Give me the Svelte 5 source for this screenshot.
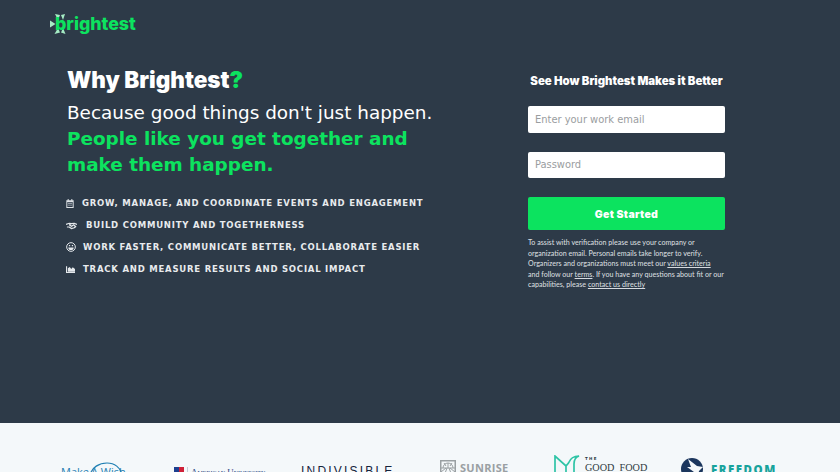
<script>
  const bullets = [
    { text: 'Grow, manage, and coordinate events and engagement', icon: 'cal' },
    { text: 'Build community and togetherness', icon: 'hands' },
    { text: 'Work faster, communicate better, collaborate easier', icon: 'smile' },
    { text: 'Track and measure results and social impact', icon: 'chart' }
  ];
</script>

<div class="page">
  <section class="hero">
    <header class="top">
      <a class="logo" href="#home">
        <svg class="sun" viewBox="0 0 20 20" width="20" height="20" aria-hidden="true">
          <g fill="#a5ecc4">
            <path d="M0 6.500 5.500 10 0 13.500Z" />
            <path d="M5 0 10 1 8 6Z" />
            <path d="M15 0 11 1 13 6Z" />
            <path d="M4.500 20 10 18.500 8 14Z" />
            <path d="M15.500 20 11 18.500 13 14Z" />
          </g>
        </svg>
        <span class="word">brightest</span>
      </a>
    </header>

    <div class="columns">
      <div class="pitch">
        <h1>Why Brightest<span class="green">?</span></h1>
        <p class="lead">Because good things don't just happen.</p>
        <p class="strong">People like you get together and make them happen.</p>
        <ul>
          {#each bullets as b}
            <li class={b.icon}>
              <svg viewBox="0 0 12 12" preserveAspectRatio="none" aria-hidden="true" class="ico">
                {#if b.icon === 'cal'}
                  <path fill="#dfe3e7" fill-rule="evenodd" d="M2.500 0h1.500v1.500h4V0h1.500v1.500H11.500V12H.5V1.500h2ZM2 4v6.500h8V4Z" />
                  <path fill="#b4bac1" d="M3 5h6v1.200H3ZM3 7.500h6v1.200H3Z" />
                {:else if b.icon === 'hands'}
                  <path fill="none" stroke="#e4e8ec" stroke-width="1.500" d="M0 4.500 3.500 3 6 3.500 9 3l3 1.500M1 8l2.500 0 2.500 2 3-1 2-2M3.500 5 6 7l2.500-2 1.500 2M6 3.500 3.500 5" />
                {:else if b.icon === 'smile'}
                  <circle cx="6" cy="6" r="5.200" fill="none" stroke="#e4e8ec" stroke-width="1.200" />
                  <path fill="#e4e8ec" d="M2.800 6.500h6.400a3.200 3.200 0 0 1-6.400 0ZM3.500 3.500h1.500v1.500H3.500ZM7 3.500h1.500v1.500H7Z" />
                {:else}
                  <path fill="#e4e8ec" d="M0 2h1.500v8.500H12V12H0ZM2.500 10V5L5 3l2 3 2-2.500L12 6v4Z" />
                {/if}
              </svg>
              <span>{b.text}</span>
            </li>
          {/each}
        </ul>
      </div>

      <form class="signup">
        <h2>See How Brightest Makes it Better</h2>
        <input type="email" placeholder="Enter your work email" />
        <input type="password" placeholder="Password" />
        <button type="button">Get Started</button>
        <p class="fine">
          To assist with verification please use your company or<br />
          organization email. Personal emails take longer to verify.<br />
          Organizers and organizations must meet our <a href="#values">values criteria</a><br />
          and follow our <a href="#terms">terms</a>. If you have any questions about fit or our<br />
          capabilities, please <a href="#contact">contact us directly</a>
        </p>
      </form>
    </div>
  </section>

  <section class="logos">
    <div class="mw">
      <span>Make</span>
      <svg class="mw-arc" viewBox="0 0 34 14" width="34" height="14" aria-hidden="true">
        <path d="M1 14C2 5 11 1 18 1c7 0 14 4 15 13" fill="none" stroke="#1f7fb3" stroke-width="1.200" />
      </svg>
      <span class="mw-b">A Wish</span>
    </div>
    <div class="au">
      <svg viewBox="0 0 10 8" width="10" height="8" aria-hidden="true">
        <rect width="5" height="8" fill="#1d3f8f" />
        <rect x="5" width="5" height="8" fill="#cf2037" />
      </svg>
      <span class="au-rule"></span>
      <span>American University</span>
    </div>
    <div class="ind">INDIVISIBLE</div>
    <div class="sunrise">
      <svg viewBox="0 0 16 16" width="16" height="16" aria-hidden="true">
        <rect x="0.750" y="0.750" width="14.500" height="14.500" fill="none" stroke="#9aa0a3" stroke-width="1.500" />
        <path d="M1 8h14M3 8a5 5 0 0 1 10 0M8 3v5M4 3l2 3M12 3l-2 3M1 12l5-4M15 12l-5-4M4 16l3-8M12 16l-3-8" fill="none" stroke="#9aa0a3" />
      </svg>
      <span>SUNRISE</span>
    </div>
    <div class="food">
      <svg viewBox="0 0 26 20" width="26" height="20" aria-hidden="true">
        <path d="M1 1v18h19V9c0-4 2-7 5-8-5 0-9 3-10.500 7L12 11 1 1ZM12 11v8" fill="none" stroke="#2ec4a6" stroke-width="1.700" />
      </svg>
      <div class="food-t">
        <span class="the">T H E</span>
        <span class="gf">GOOD&nbsp; FOOD</span>
      </div>
    </div>
    <div class="freedom">
      <svg viewBox="0 0 22 22" width="22" height="22" aria-hidden="true">
        <circle cx="11" cy="11" r="11" fill="#1b365d" />
        <path d="M7 1 16 8l6 1-4 4-2 9-3-8-7-5 4 0Z" fill="#f4f8fa" />
      </svg>
      <span>FREEDOM</span>
    </div>
  </section>
</div>

<style>
  :global(body) {
    margin: 0;
    overflow: hidden;
  }

  .page {
    width: 840px;
    height: 472px;
    overflow: hidden;
    font-family: "DejaVu Sans", sans-serif;
  }

  .hero {
    height: 423px;
    background: #2d3a48;
    box-sizing: border-box;
    padding: 10px 0 0 50px;
  }

  .top {
    height: 28px;
  }

  .logo {
    position: relative;
    display: inline-block;
    padding-left: 5px;
    text-decoration: none;
  }

  .sun {
    position: absolute;
    left: 0;
    top: 4px;
  }

  .word {
    position: relative;
    font: 800 17.800px/27px Inter, sans-serif;
    color: #0ce35f;
  }

  .columns {
    display: flex;
    padding: 28px 0 0 17px;
  }

  .pitch {
    width: 461px;
  }

  h1 {
    margin: 0;
    font: 900 22.500px/28px Inter, sans-serif;
    color: #fff;
  }

  .green {
    color: #0ce35f;
  }

  .lead {
    margin: 6px 0 0;
    font-size: 18.400px;
    line-height: 26px;
    color: #fff;
  }

  .strong {
    margin: 0;
    width: 370px;
    font-size: 18.400px;
    font-weight: 700;
    line-height: 26px;
    color: #0ce35f;
  }

  ul {
    list-style: none;
    margin: 14px 0 0;
    padding: 0;
  }

  li {
    display: flex;
    align-items: center;
    height: 22px;
    font-size: 8.500px;
    font-weight: 700;
    letter-spacing: 0.780px;
    text-transform: uppercase;
    color: #e8ebee;
  }

  .ico {
    height: 9px;
    margin-left: -1px;
  }

  .cal .ico {
    width: 8px;
    margin-right: 8px;
  }

  .hands .ico {
    width: 11px;
    margin-right: 9px;
  }

  .smile .ico {
    width: 10px;
    height: 10px;
    margin-right: 7px;
  }

  .chart .ico {
    width: 9px;
    height: 8px;
    margin-right: 8px;
  }

  .signup {
    width: 197px;
    display: flex;
    flex-direction: column;
  }

  h2 {
    margin: 5px 0 0;
    font: 900 11.400px/20px Inter, sans-serif;
    color: #fff;
    text-align: center;
    white-space: nowrap;
  }

  input {
    box-sizing: border-box;
    width: 197px;
    height: 26.500px;
    margin: 15px 0 0;
    padding: 0 7px;
    border: 0;
    border-radius: 2px;
    background: #fff;
    font: 11px "DejaVu Sans Condensed", "DejaVu Sans", sans-serif;
  }

  input + input {
    margin-top: 19px;
  }

  input::placeholder {
    color: #9a9da0;
    opacity: 1;
  }

  button {
    height: 33px;
    margin-top: 19px;
    padding: 1px 0 0;
    border: 0;
    border-radius: 2px;
    background: #0ce35f;
    color: #fff;
    font: 900 10.500px Inter, sans-serif;
    letter-spacing: 0.300px;
  }

  .fine {
    margin: 8px 0 0;
    font: 500 7.100px/10.500px Lato, sans-serif;
    color: #d6dadf;
    white-space: nowrap;
  }

  .fine a {
    color: inherit;
  }

  .logos {
    position: relative;
    height: 49px;
    background: #f4f8fa;
    overflow: hidden;
  }

  .logos > div {
    position: absolute;
    display: flex;
    white-space: nowrap;
  }

  .mw {
    left: 61px;
    top: 42px;
    font: 500 11px/14px "Open Sans", sans-serif;
    color: #1f7fb3;
  }

  .mw-arc {
    position: absolute;
    left: 28px;
    top: -3px;
  }

  .mw-b {
    margin-left: 2px;
  }

  .au {
    left: 174px;
    top: 44px;
    gap: 2px;
    font: 8.900px/10px "Liberation Serif", serif;
    font-variant: small-caps;
    color: #1e3f7e;
  }

  .au-rule {
    width: 1px;
    height: 12px;
    margin: 0 1px;
    background: #c5ccd6;
  }

  .ind {
    left: 301px;
    top: 41px;
    font: 12px/15px "Liberation Sans", sans-serif;
    letter-spacing: 2.200px;
    color: #15243c;
  }

  .sunrise {
    left: 440px;
    top: 37px;
    gap: 4px;
    font: 700 11px/16px "Open Sans", sans-serif;
    letter-spacing: 0.300px;
    color: #9aa0a3;
  }

  .food {
    left: 554px;
    top: 32px;
    gap: 5px;
  }

  .food-t {
    display: flex;
    flex-direction: column;
    color: #2d3a3f;
  }

  .the {
    font: 700 4px/7px "DejaVu Sans", sans-serif;
  }

  .gf {
    font: 10.200px/12px "Liberation Serif", serif;
  }

  .freedom {
    left: 681px;
    top: 35px;
    gap: 8px;
    align-items: flex-start;
    font: 800 11.500px/20px "Open Sans", sans-serif;
    letter-spacing: 1.500px;
    color: #17a39c;
  }

  .freedom span {
    margin-top: 2px;
  }
</style>
